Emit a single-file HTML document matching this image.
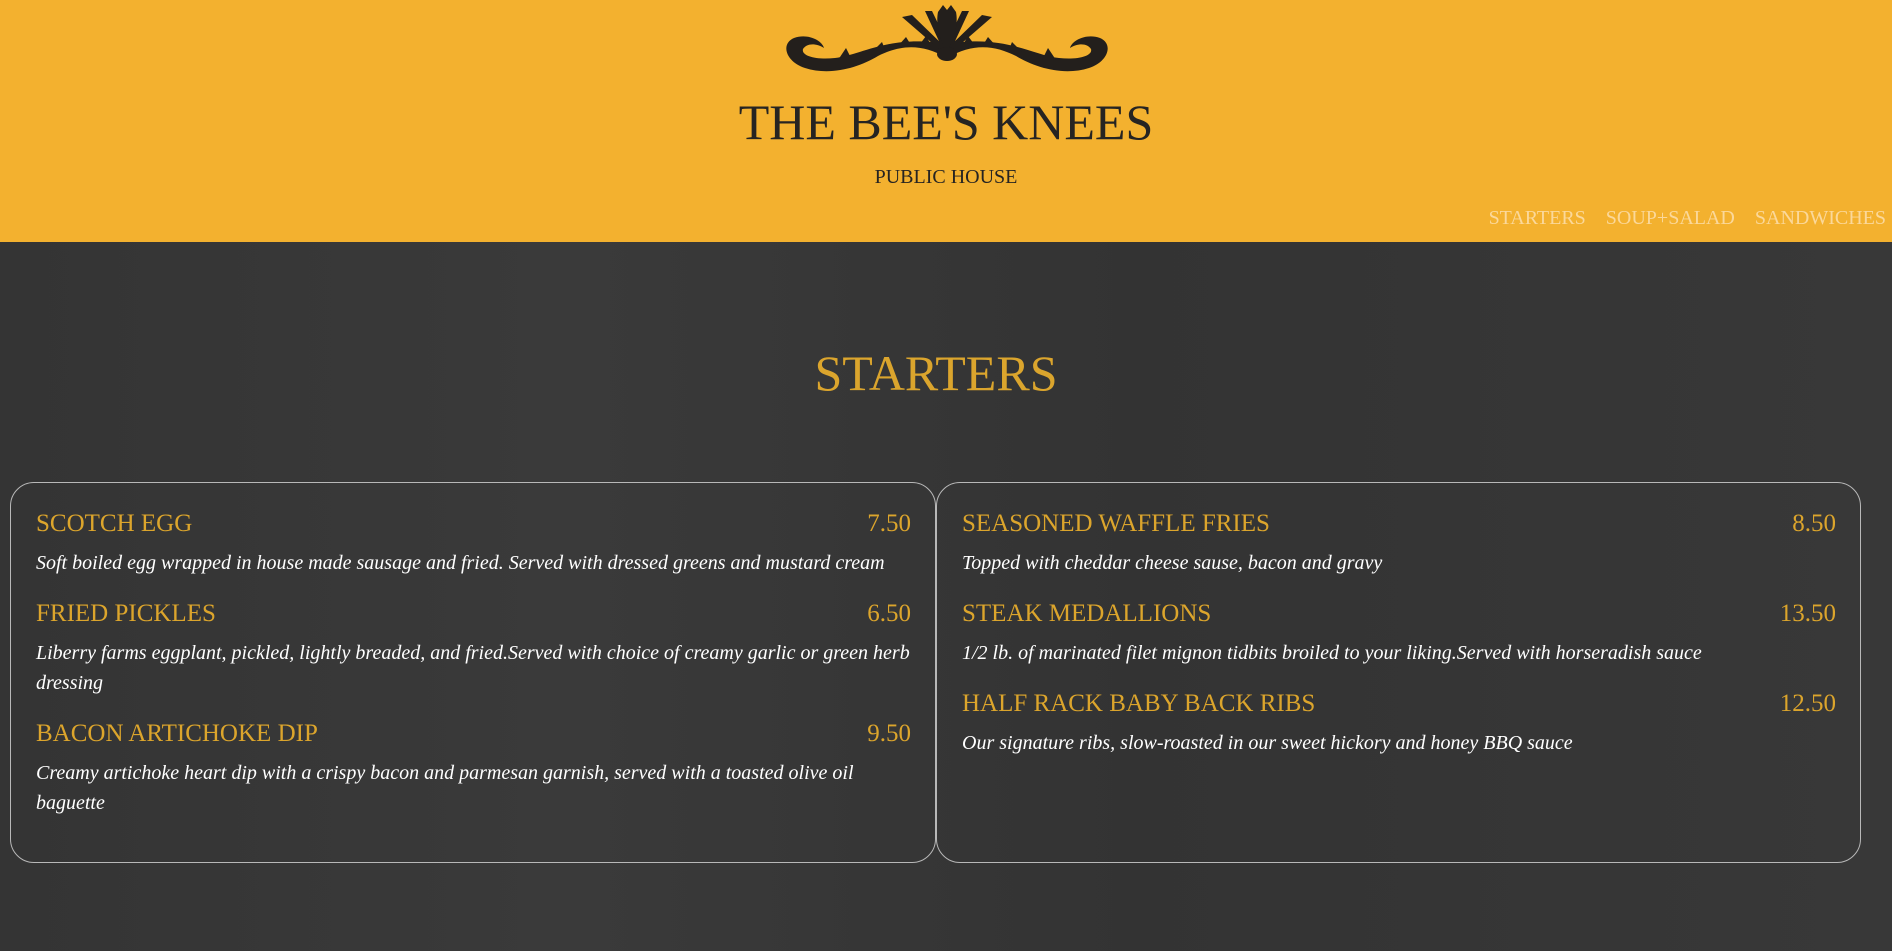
<!DOCTYPE html>
<html><head><meta charset="utf-8"><style>
*{margin:0;padding:0;box-sizing:border-box}
body{width:1892px;height:951px;overflow:hidden;background:#363636;font-family:"Liberation Serif",serif;position:relative}
.hdr{position:absolute;left:0;top:0;width:1892px;height:242px;background:#f3b12f}
.abs{position:absolute;white-space:nowrap}
.title{left:0;width:1892px;text-align:center;top:91px;font-size:50px;line-height:62px;color:#262422}
.sub{left:0;width:1892px;text-align:center;top:165px;font-size:20px;line-height:24px;color:#262422}
.nav{top:206px;right:6px;font-size:20px;line-height:24px;color:#fbd89a}
.nav span{margin-left:20px}
.main{position:absolute;left:0;top:242px;width:1892px;height:709px;background:linear-gradient(90deg,#343434,#3a3a3a 30%,#333 60%,#383838)}
.h{left:0;width:1872px;text-align:center;top:341px;font-size:50px;line-height:64px;color:#dba52d}
.box{position:absolute;top:482px;height:381px;border:1px solid #b8b8b8;border-radius:24px}
.n{font-size:25px;line-height:36px;color:#dca52c}
.d{font-size:20px;line-height:30px;color:#fff;font-style:italic;white-space:normal}
</style></head><body>
<div class="hdr"></div>
<svg class="abs" style="left:780px;top:0" width="340" height="85" viewBox="0 0 340 85">
<g fill="#231f1c">
<path id="sw" d="M167,58 C140,42 118,46 98,56 C78,68 50,76 25,68 C6,62 0,44 14,38 C27,33 42,40 44,48 C36,43 27,43 23,49 C21,56 36,60 55,58 C82,55 110,34 167,44 Z"/>
<path d="M58,60 l8,-12 l6,12 z M92,52 l10,-10 l4,10 z M118,46 l8,-9 l5,8 z M140,44 l6,-8 l4,7 z"/>
<g transform="translate(334,0) scale(-1,1)"><use href="#sw"/><path d="M58,60 l8,-12 l6,12 z M92,52 l10,-10 l4,10 z M118,46 l8,-9 l5,8 z M140,44 l6,-8 l4,7 z"/></g>
<path d="M167,56 L122,17 L132,15 L164,46 Z M167,56 L212,17 L202,15 L170,46 Z M164,52 L145,11 L152,11 L169,46 Z M170,52 L189,11 L182,11 L165,46 Z"/>
<path d="M167,52 C158,36 156,22 158,12 L163,5 L167,10 L171,5 L176,12 C178,22 176,36 167,52 Z"/>
<ellipse cx="167" cy="54" rx="10" ry="7"/>
</g></svg>
<div class="abs title">THE BEE'S KNEES</div>
<div class="abs sub">PUBLIC HOUSE</div>
<div class="abs nav"><span>STARTERS</span><span>SOUP+SALAD</span><span>SANDWICHES</span></div>
<div class="main"></div>
<div class="abs h">STARTERS</div>
<div class="box" style="left:10px;width:926px"></div>
<div class="box" style="left:936px;width:925px"></div>

<div class="abs n" style="left:36px;top:506px">SCOTCH EGG</div><div class="abs n" style="left:820px;width:91px;text-align:right;top:506px">7.50</div>
<div class="abs d" style="left:36px;width:880px;top:548px">Soft boiled egg wrapped in house made sausage and fried. Served with dressed greens and mustard cream</div>
<div class="abs n" style="left:36px;top:596px">FRIED PICKLES</div><div class="abs n" style="left:820px;width:91px;text-align:right;top:596px">6.50</div>
<div class="abs d" style="left:36px;width:880px;top:638px">Liberry farms eggplant, pickled, lightly breaded, and fried.Served with choice of creamy garlic or green herb dressing</div>
<div class="abs n" style="left:36px;top:716px">BACON ARTICHOKE DIP</div><div class="abs n" style="left:820px;width:91px;text-align:right;top:716px">9.50</div>
<div class="abs d" style="left:36px;width:880px;top:758px">Creamy artichoke heart dip with a crispy bacon and parmesan garnish, served with a toasted olive oil baguette</div>

<div class="abs n" style="left:962px;top:506px">SEASONED WAFFLE FRIES</div><div class="abs n" style="left:1745px;width:91px;text-align:right;top:506px">8.50</div>
<div class="abs d" style="left:962px;width:880px;top:548px">Topped with cheddar cheese sause, bacon and gravy</div>
<div class="abs n" style="left:962px;top:596px">STEAK MEDALLIONS</div><div class="abs n" style="left:1745px;width:91px;text-align:right;top:596px">13.50</div>
<div class="abs d" style="left:962px;width:880px;top:638px">1/2 lb. of marinated filet mignon tidbits broiled to your liking.Served with horseradish sauce</div>
<div class="abs n" style="left:962px;top:686px">HALF RACK BABY BACK RIBS</div><div class="abs n" style="left:1745px;width:91px;text-align:right;top:686px">12.50</div>
<div class="abs d" style="left:962px;width:880px;top:728px">Our signature ribs, slow-roasted in our sweet hickory and honey BBQ sauce</div>
</body></html>
